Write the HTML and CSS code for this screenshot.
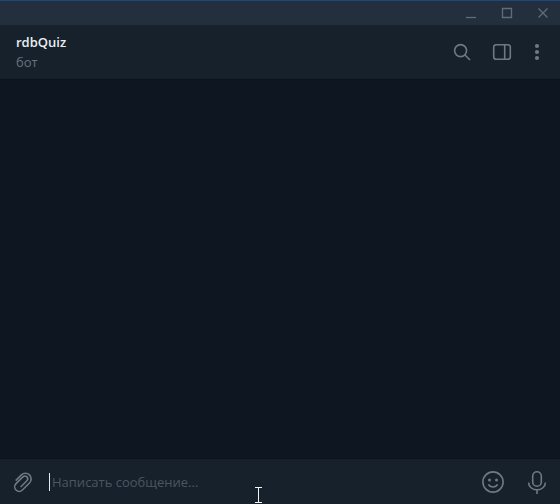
FILE: index.html
```html
<!DOCTYPE html>
<html lang="ru">
<head>
<meta charset="utf-8">
<title>rdbQuiz</title>
<link rel="stylesheet" href="styles.css">
</head>
<body>
<div class="window">
  <div class="titlebar">
    <button class="icon-button" type="button" aria-label="Свернуть">
      <svg width="24" height="24" viewBox="0 0 24 24"><path d="M7 16.5h10"/></svg>
    </button>
    <button class="icon-button" type="button" aria-label="Развернуть">
      <svg width="24" height="24" viewBox="0 0 24 24"><path d="M7.5 7.5h9v9h-9z"/></svg>
    </button>
    <button class="icon-button" type="button" aria-label="Закрыть">
      <svg width="24" height="24" viewBox="0 0 24 24"><path d="M7.5 7.5l9 9M16.5 7.5l-9 9"/></svg>
    </button>
  </div>
  <header class="chat-header">
    <div class="peer">
      <h1 class="peer-name">rdbQuiz</h1>
      <p class="peer-status">бот</p>
    </div>
    <div class="header-actions">
      <button class="icon-button" type="button" aria-label="Поиск">
        <svg width="24" height="24" viewBox="0 0 24 24"><circle cx="10.6" cy="10.6" r="6"/><path d="M15 15l5 5"/></svg>
      </button>
      <button class="icon-button" type="button" aria-label="Информация">
        <svg width="24" height="24" viewBox="0 0 24 24"><rect x="3.7" y="4.7" width="16.6" height="14.6" rx="2.6"/><path d="M14.7 5v14"/></svg>
      </button>
      <button class="icon-button" type="button" aria-label="Меню">
        <svg class="solid" width="14" height="24" viewBox="0 0 14 24"><circle cx="7" cy="6" r="2.1"/><circle cx="7" cy="12" r="2.1"/><circle cx="7" cy="18" r="2.1"/></svg>
      </button>
    </div>
  </header>
  <main class="history"></main>
  <form class="composer">
    <button class="icon-button" type="button" aria-label="Прикрепить файл">
      <svg width="24" height="24" viewBox="0 0 24 24"><path transform="translate(11.4 12.4) rotate(45)" d="M-6 3.5V-4.6a5.7 5.7 0 0 1 11.4 0V5.4a4.5 4.5 0 0 1-9 0V-4.3a2.8 2.8 0 0 1 5.6 0V4.5"/></svg>
    </button>
    <div class="field">
      <span class="caret"></span>
      <input class="message-input" type="text" aria-label="Сообщение" placeholder="Написать сообщение...">
    </div>
    <button class="icon-button" type="button" aria-label="Эмодзи">
      <svg width="24" height="24" viewBox="0 0 24 24"><circle cx="12" cy="12" r="10.1"/><path d="M7.4 14.4c1.9 3.4 7.3 3.4 9.2 0"/><g class="solid"><circle cx="8.5" cy="10" r="1.5"/><circle cx="15.5" cy="10" r="1.5"/></g></svg>
    </button>
    <button class="icon-button" type="button" aria-label="Голосовое сообщение">
      <svg width="24" height="24" viewBox="0 0 24 24"><rect x="7.7" y="1.7" width="8.6" height="14.6" rx="4.3"/><path d="M3.6 12.5a8.4 7.4 0 0 0 16.8 0M12 20v4"/></svg>
    </button>
  </form>
  <svg class="pointer" width="7" height="16" viewBox="0 0 7 16"><path d="M0 .5h7M3.5 1v14M0 15.5h7"/></svg>
</div>
</body>
</html>
```

FILE: styles.css
```css
* {
  box-sizing: border-box;
}

body {
  margin: 0;
  background: #0e1621;
  font-family: "Open Sans", "Noto Sans", sans-serif;
  font-size: 13px;
  line-height: 20px;
}

.window {
  position: relative;
  display: flex;
  flex-direction: column;
  min-height: 100vh;
}

.titlebar {
  display: flex;
  justify-content: flex-end;
  gap: 12px;
  padding-right: 5px;
  border-top: 1px solid #1c4686;
  background: #242f3d;
  color: #616c78;
}

.icon-button {
  display: block;
  flex: none;
  padding: 0;
  border: 0;
  background: none;
  color: inherit;
}

.icon-button svg {
  display: block;
  fill: none;
  stroke: currentColor;
  stroke-width: 1.6;
}

.titlebar svg {
  stroke-width: 1.3;
}

.icon-button svg.solid,
.icon-button .solid {
  fill: currentColor;
  stroke: none;
}

.chat-header {
  display: flex;
  align-items: center;
  justify-content: space-between;
  padding: 7px 16px;
  background: #17212b;
  color: #6f7982;
}

.peer-name {
  margin: 0;
  color: #e9eef2;
  font-size: 13px;
  font-weight: 600;
}

.peer-status {
  margin: 0;
  color: #66737f;
}

.header-actions {
  display: flex;
  gap: 16px;
}

.history {
  flex: 1;
  border-top: 1px solid #0b121b;
}

.composer {
  display: flex;
  align-items: center;
  gap: 20px;
  padding: 11px 11px 10px;
  border-top: 1px solid #0b121b;
  background: #17212b;
  color: #6f7982;
}

.field {
  display: flex;
  flex: 1;
  align-items: center;
  gap: 2px;
  margin-left: -6px;
}

.caret {
  width: 1px;
  height: 18px;
  background: #e6eaee;
}

.message-input {
  flex: 1;
  min-width: 0;
  height: 24px;
  padding: 0;
  border: 0;
  outline: 0;
  background: none;
  color: #e9eef2;
  font: inherit;
}

.message-input::placeholder {
  color: #4b5661;
  opacity: 1;
}

.pointer {
  position: absolute;
  bottom: 1px;
  left: 255px;
  fill: none;
  stroke: #f2f4f6;
}
```
